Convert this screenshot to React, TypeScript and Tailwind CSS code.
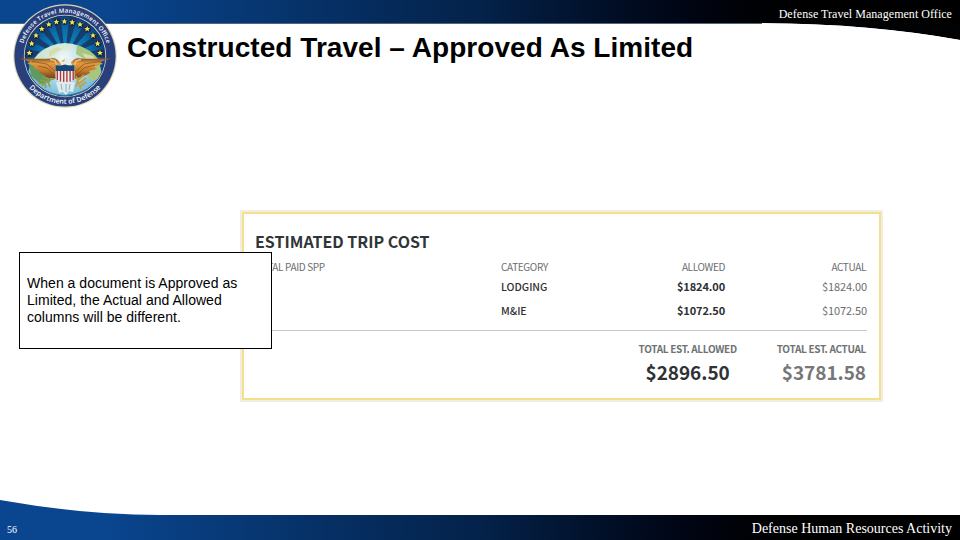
import React from "react";

const STARS = [
  [29.3, 53],
  [31.7, 43.6],
  [36, 35.4],
  [41.8, 29],
  [48.8, 24.5],
  [56.4, 21.9],
  [64.4, 21.4],
  [72.2, 22.3],
  [80, 24.5],
  [87.2, 29],
  [93, 35.4],
  [97.6, 43.6],
  [100, 53],
];

const RAYS = [-84, -60, -36, -12, 12, 36, 60, 84];

const costRows = [
  { category: "LODGING", allowed: "$1824.00", actual: "$1824.00" },
  { category: "M&IE", allowed: "$1072.50", actual: "$1072.50" },
];

const STAR_PATH = "M0 -2.7 L0.8 -0.9 L2.6 -0.8 L1.2 0.4 L1.7 2.3 L0 1.2 L-1.7 2.3 L-1.2 0.4 L-2.6 -0.8 L-0.8 -0.9 Z";

const Seal: React.FC = () => (
  <svg className="absolute left-3 top-[3px] h-[106px] w-[106px]" viewBox="12 3 106 106">
    <defs>
      <radialGradient id="sky" cx="0.5" cy="0.5" r="0.5">
        <stop offset="0" stopColor="#1592c6" />
        <stop offset="0.65" stopColor="#0a6fab" />
        <stop offset="1" stopColor="#0c4486" />
      </radialGradient>
      <radialGradient id="globe" cx="0.48" cy="0.2" r="0.8">
        <stop offset="0" stopColor="#f4faf5" />
        <stop offset="0.35" stopColor="#b4dcea" />
        <stop offset="0.7" stopColor="#66b3d5" />
        <stop offset="1" stopColor="#1870a7" />
      </radialGradient>
      <linearGradient id="wing" x1="0" y1="0" x2="0" y2="1">
        <stop offset="0" stopColor="#8a5422" />
        <stop offset="0.25" stopColor="#e09a42" />
        <stop offset="0.6" stopColor="#c47a2a" />
        <stop offset="1" stopColor="#6b3a17" />
      </linearGradient>
      <clipPath id="inner">
        <circle cx="65" cy="56" r="39.7" />
      </clipPath>
      <path id="arcTop" d="M21.6 56 A43.4 43.4 0 0 1 108.4 56" />
      <path id="arcBottom" d="M17.1 56 A47.9 47.9 0 0 0 112.9 56" />
    </defs>
    <circle cx="65" cy="56" r="51.8" fill="#dcd9b4" />
    <circle cx="65" cy="56" r="50.6" fill="#283f7c" />
    <circle cx="65" cy="56" r="41.2" fill="#d9dcd0" />
    <circle cx="65" cy="56" r="40.4" fill="#163569" />
    <g clipPath="url(#inner)">
      <circle cx="65" cy="56" r="39.7" fill="url(#sky)" />
      {RAYS.map((angle) => (
        <path key={angle} d="M65 57 L60.7 15 L69.3 15 Z" fill="#173563" opacity="0.85" transform={`rotate(${angle} 65 57)`} />
      ))}
      <circle cx="65" cy="81" r="38" fill="url(#globe)" />
      {/* land masses */}
      <path d="M32 62 Q39 49 53 46 Q65 42 76 46 L69 50 L60 51 L54 57 L43 61 L35 70 Z" fill="#dce9cb" opacity="0.7" />
      <path d="M77 45 Q91 49 99 60 L102 78 L91 81 L83 70 L85 59 L76 54 Z" fill="#a9c67c" />
      <path d="M29 64 L42 64 L52 70 L50 82 L41 84 L31 76 Z" fill="#5f9a63" />
      <path d="M49 51 L57 47 L62 49 L55 53 L49 57 Z M82 53 L93 56 L98 63 L88 62 Z" fill="#d3deb0" />
      <path d="M26 74 Q43 94 64 95 Q91 93 104 72 L100 95 L65 104 L32 94 Z" fill="#12608f" opacity="0.75" />
    </g>
    {STARS.map(([x, y]) => (
      <g key={x} transform={`translate(${x} ${y})`}>
        <circle cx="0.3" cy="0.4" r="3.2" fill="#141e2d" opacity="0.75" />
        <path d={STAR_PATH} fill="#f0e65c" transform="scale(1.12)" />
      </g>
    ))}
    {/* wings */}
    <path d="M61 64 Q57 57 51 58.5 Q42 59 19.5 58.3 L30 62 L27 63 L35 66.5 L33 68 L40 71 L39 73 L46 76 L44 77 L57 79 L60 72 Z" fill="url(#wing)" />
    <path d="M70 64 Q74 57 81 58.5 Q91 59 111.5 58.3 L100 62 L103 64 L94 66.5 L97 69 L89 71 L90 73 L82 77 L73 79 L69 72 Z" fill="url(#wing)" />
    <path d="M32 61.5 L47 64 L57 73 M38 66 L47 68 L55 76 M100 61.5 L84 64 L74 73 M95 65 L84 68 L76 76" fill="none" stroke="#7b4518" strokeWidth="0.6" />
    <path d="M50 59.5 L55 60.5 L58 68 M81 59.5 L76 61 L73 69" fill="none" stroke="#f2bd62" strokeWidth="1.6" />
    {/* olive branch and arrows */}
    <path d="M54 79 Q46 80 42 86 M49 79 L43 77 M47 82 L40 80 M45 84 L38 83 M48 82 L50 87 M45 84 L46 88" fill="none" stroke="#8fa04a" strokeWidth="1.6" />
    <path d="M76 76 L81 89 M78 80 L84 75 M80 83 L86 78 M81 86 L86 82 M78 80 L76 87" fill="none" stroke="#c39f3c" strokeWidth="1.7" />
    {/* tail and head */}
    <path d="M56 82 L75 82 L73 92 L69 91 L66 95 L63 92 L59 93 Z" fill="#dcebed" />
    <path d="M61 84 L62 90 M66 84 V92 M70 84 L69 90" stroke="#7097ac" strokeWidth="0.7" />
    <path d="M61 65 L63 59 Q66 54.5 69 59 L72 65 Z" fill="#e6efee" />
    <path d="M65 59 L61 61 L64 62 Z" fill="#d9ba4b" />
    {/* shield */}
    <path d="M55.5 65 Q60 66 65 64.5 Q70 66 74.5 65 V79 Q71 82 65 82.5 Q58 82 55.5 79 Z" fill="#f2eee8" />
    <path d="M57.3 71 V80 M60.5 71 V81.5 M63.7 71 V82 M66.9 71 V82 M70.1 71 V81.5 M73.2 71 V80" stroke="#a83a45" strokeWidth="1.4" />
    <path d="M55.5 65 Q60 66 65 64.5 Q70 66 74.5 65 V71 H55.5 Z" fill="#164878" />
    <text className="font-['Open_Sans',sans-serif] text-[6px] font-semibold" fill="#fff">
      <textPath href="#arcTop" startOffset="50%" textAnchor="middle" textLength="111">
        Defense Travel Management Office
      </textPath>
    </text>
    <text className="font-['Open_Sans',sans-serif] text-[7px] font-semibold" fill="#fff">
      <textPath href="#arcBottom" startOffset="50%" textAnchor="middle" textLength="81">
        Department of Defense
      </textPath>
    </text>
  </svg>
);

const Header: React.FC = () => (
  <header className="relative h-[70px] shrink-0">
    <div className="flex h-6 justify-end border-b border-[#53677c] bg-linear-to-r from-[#0a4690] from-10% via-[#04224a] via-50% to-black to-90% pr-2 pt-[6px]">
      <svg className="absolute right-0 top-[23px] h-[18px] w-[198px]" viewBox="0 0 198 18">
        <path d="M0 0 H198 V17 Q110 1 0 0 Z" fill="#010204" />
        <path d="M0 0 Q110 1 198 17 V18 H0 Z" fill="#fff" />
      </svg>
      <span className="relative whitespace-nowrap font-['Liberation_Serif',serif] text-[12px] leading-4 tracking-[0.04px] text-white">
        Defense Travel Management Office
      </span>
    </div>
    <Seal />
    <h1 className="ml-[127px] mt-2 whitespace-nowrap font-['Liberation_Sans',sans-serif] text-[28px] font-bold leading-8 tracking-[0.05px] text-black">
      Constructed Travel – Approved As Limited
    </h1>
  </header>
);

const TripCost: React.FC = () => (
  <section className="ml-[240px] h-[192px] w-[643px] border-2 border-[#f1ede0] bg-white font-['Noto_Sans_CJK_SC',sans-serif]">
    <div className="h-full border-2 border-[#f4df8d] pl-[11px] pr-3">
      <h2 className="mt-4 whitespace-nowrap text-[16px] font-bold leading-[22px] text-[#303638]">ESTIMATED TRIP COST</h2>
      <div className="mt-[7px] grid grid-cols-[246px_1fr_141px] border-b border-[#c5c7c8] pb-[7px] text-[10px] leading-4 text-[#6b6e70]">
        <span className="whitespace-nowrap tracking-[-0.35px]">TOTAL PAID SPP</span>
        <div className="flex justify-between pr-px tracking-[-0.35px]">
          <span>CATEGORY</span>
          <span>ALLOWED</span>
        </div>
        <span className="pr-px text-right tracking-[-0.35px]">ACTUAL</span>
        {costRows.map((row) => (
          <React.Fragment key={row.category}>
            <div className="col-start-2 flex h-6 justify-between pr-px pt-[3px] text-[#2d3033]">
              <span className="pt-px text-[10.5px] font-medium">{row.category}</span>
              <span className="text-[11px] font-bold tracking-[-0.12px]">{row.allowed}</span>
            </div>
            <span className="h-6 pt-[3px] text-right text-[11px] tracking-[-0.1px]">{row.actual}</span>
          </React.Fragment>
        ))}
      </div>
      <div className="mt-[10px] flex justify-end gap-10 pr-px text-[#6f7274]">
        <div>
          <div className="text-[10px] font-bold leading-4 tracking-[-0.32px]">TOTAL EST. ALLOWED</div>
          <div className="mr-[7px] mt-[3px] text-right text-[19px] font-bold leading-6 tracking-[-0.05px] text-[#303335]">$2896.50</div>
        </div>
        <div>
          <div className="text-[10px] font-bold leading-4 tracking-[-0.32px]">TOTAL EST. ACTUAL</div>
          <div className="mt-[3px] text-right text-[19px] font-bold leading-6 tracking-[-0.05px] text-[#777]">$3781.58</div>
        </div>
      </div>
    </div>
  </section>
);

const Footer: React.FC = () => (
  <footer className="relative mt-auto flex h-[25px] items-center justify-between bg-linear-to-r from-[#0a4690] from-10% via-[#04224a] via-50% to-black to-90% pl-[7px] pr-2 font-['Liberation_Serif',serif] text-white">
    <svg className="absolute -top-[15px] left-0 h-4 w-[160px]" viewBox="0 0 160 16">
      <path d="M0 0 Q84 15 160 15 V16 H0 Z" fill="#0a4690" />
    </svg>
    <span className="relative mt-1 text-[10px] leading-4">56</span>
    <span className="mt-[2px] whitespace-nowrap text-[14px] leading-5">Defense Human Resources Activity</span>
  </footer>
);

export default function App() {
  return (
    <main className="flex h-[540px] w-[960px] flex-col overflow-hidden bg-white">
      <Header />
      <div className="relative mt-[140px]">
        <TripCost />
        <aside className="absolute left-[19px] top-[42px] flex h-[97px] w-[253px] items-center border border-black bg-white px-[7px] font-['Liberation_Sans',sans-serif] text-[14px] leading-[17px] tracking-[0.03px] text-black">
          <p className="whitespace-nowrap">
            When a document is Approved as
            <br />
            Limited, the Actual and Allowed
            <br />
            columns will be different.
          </p>
        </aside>
      </div>
      <Footer />
    </main>
  );
}
